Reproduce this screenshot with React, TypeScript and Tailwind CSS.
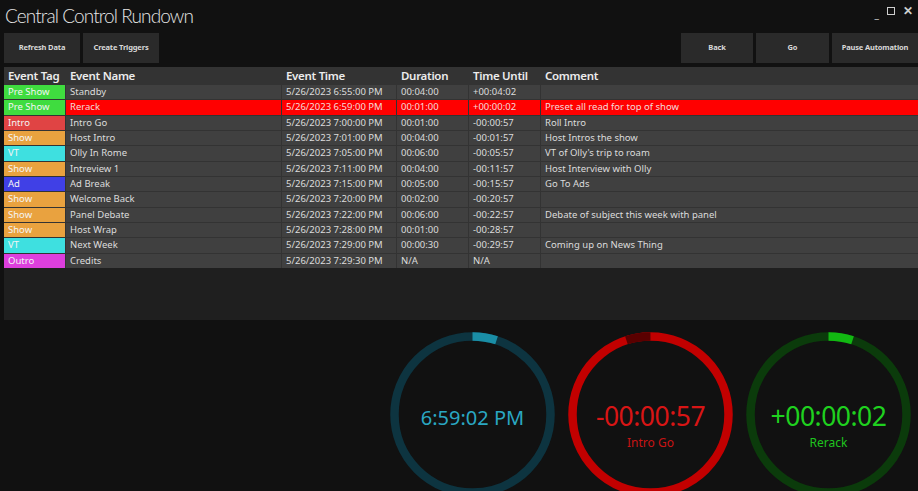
import React from "react";

type Row = {
  tag: string;
  tagClass: string;
  name: string;
  time: string;
  duration: string;
  until: string;
  comment: string;
  live?: boolean;
};

const rows: Row[] = [
  { tag: "Pre Show", tagClass: "bg-[#3fdc3f]", name: "Standby", time: "5/26/2023 6:55:00 PM", duration: "00:04:00", until: "+00:04:02", comment: "" },
  { tag: "Pre Show", tagClass: "bg-[#3fdc3f]", name: "Rerack", time: "5/26/2023 6:59:00 PM", duration: "00:01:00", until: "+00:00:02", comment: "Preset all read for top of show", live: true },
  { tag: "Intro", tagClass: "bg-[#e04444]", name: "Intro Go", time: "5/26/2023 7:00:00 PM", duration: "00:01:00", until: "-00:00:57", comment: "Roll Intro" },
  { tag: "Show", tagClass: "bg-[#e9a23f]", name: "Host Intro", time: "5/26/2023 7:01:00 PM", duration: "00:04:00", until: "-00:01:57", comment: "Host Intros the show" },
  { tag: "VT", tagClass: "bg-[#3ee0e0]", name: "Olly In Rome", time: "5/26/2023 7:05:00 PM", duration: "00:06:00", until: "-00:05:57", comment: "VT of Olly's trip to roam" },
  { tag: "Show", tagClass: "bg-[#e9a23f]", name: "Intreview 1", time: "5/26/2023 7:11:00 PM", duration: "00:04:00", until: "-00:11:57", comment: "Host Interview with Olly" },
  { tag: "Ad", tagClass: "bg-[#4040e6]", name: "Ad Break", time: "5/26/2023 7:15:00 PM", duration: "00:05:00", until: "-00:15:57", comment: "Go To Ads" },
  { tag: "Show", tagClass: "bg-[#e9a23f]", name: "Welcome Back", time: "5/26/2023 7:20:00 PM", duration: "00:02:00", until: "-00:20:57", comment: "" },
  { tag: "Show", tagClass: "bg-[#e9a23f]", name: "Panel Debate", time: "5/26/2023 7:22:00 PM", duration: "00:06:00", until: "-00:22:57", comment: "Debate of subject this week with panel" },
  { tag: "Show", tagClass: "bg-[#e9a23f]", name: "Host Wrap", time: "5/26/2023 7:28:00 PM", duration: "00:01:00", until: "-00:28:57", comment: "" },
  { tag: "VT", tagClass: "bg-[#3ee0e0]", name: "Next Week", time: "5/26/2023 7:29:00 PM", duration: "00:00:30", until: "-00:29:57", comment: "Coming up on News Thing" },
  { tag: "Outro", tagClass: "bg-[#dd3fdd]", name: "Credits", time: "5/26/2023 7:29:30 PM", duration: "N/A", until: "N/A", comment: "" },
];

const cols = "grid grid-cols-[61px_216px_115px_72px_72px_1fr]";

// ring drawn as svg: track + highlighted arc starting at top
const Ring = ({
  track,
  accent,
  from,
  to,
  pad,
  children,
}: {
  track: string;
  accent: string;
  from: number;
  to: number;
  pad: string;
  children: React.ReactNode;
}) => {
  const r = 78;
  const c = 2 * Math.PI * r;
  const len = ((to - from) / 360) * c;
  return (
    <div className="relative w-[165px] h-[165px] shrink-0">
      <svg width="165" height="165" viewBox="0 0 165 165" className="absolute inset-0">
        <circle cx="82.5" cy="82.5" r={r} fill="none" stroke={track} strokeWidth="8.5" />
        <circle
          cx="82.5"
          cy="82.5"
          r={r}
          fill="none"
          stroke={accent}
          strokeWidth="8.5"
          strokeDasharray={`${len} ${c}`}
          transform={`rotate(${from - 90} 82.5 82.5)`}
        />
      </svg>
      <div className={`absolute inset-0 flex flex-col items-center ${pad}`}>{children}</div>
    </div>
  );
};

const Btn = ({ label, w }: { label: string; w: string }) => (
  <button
    className={`${w} h-[30px] bg-[#2a2a2a] text-[#d8d8d8] text-[7.5px] font-bold tracking-[-0.15px] flex items-center justify-center`}
  >
    {label}
  </button>
);

const App = () => {
  return (
    <div
      className="w-[918px] h-[491px] overflow-hidden bg-[#111111] text-white flex flex-col"
      style={{ fontFamily: "'Noto Sans', 'Open Sans', sans-serif" }}
    >
      <div className="h-[33px] shrink-0 flex items-start justify-between pl-[5px]">
        <div
          className="text-[19px] font-light text-[#e6e6e6] leading-none pt-[6px] tracking-[-0.9px]"
          style={{ fontFamily: "Lato, 'Noto Sans', sans-serif" }}
        >
          Central Control Rundown
        </div>
        <div className="flex items-center gap-[8px] pt-[3px] pr-[5px] text-[#cfcfcf]">
          <span className="text-[10px] leading-none pt-[6px]">_</span>
          <span className="w-[8px] h-[8px] border border-[#cfcfcf]" />
          <span className="text-[12px] leading-none font-bold">✕</span>
        </div>
      </div>

      <div className="h-[30px] shrink-0 flex items-center justify-between pl-[4px]">
        <div className="flex gap-[3px]">
          <Btn label="Refresh Data" w="w-[76px]" />
          <Btn label="Create Triggers" w="w-[76px]" />
        </div>
        <div className="flex gap-[3px]">
          <Btn label="Back" w="w-[72px]" />
          <Btn label="Go" w="w-[73px]" />
          <Btn label="Pause Automation" w="w-[86px]" />
        </div>
      </div>

      <div className="mt-[4px] ml-[4px] h-[253px] shrink-0 bg-[#1f1f1f] flex flex-col">
        <div className={`${cols} h-[17px] shrink-0 bg-[#333333] text-[11.5px] font-semibold text-[#ececec] leading-[17px]`}>
          <div className="pl-[4px] tracking-[-0.3px]">Event Tag</div>
          <div className="pl-[5px] tracking-[-0.3px]">Event Name</div>
          <div className="pl-[5px] tracking-[-0.3px]">Event Time</div>
          <div className="pl-[5px] tracking-[-0.3px]">Duration</div>
          <div className="pl-[5px] tracking-[-0.3px]">Time Until</div>
          <div className="pl-[5px] tracking-[-0.3px]">Comment</div>
        </div>
        {rows.map((r, i) => (
          <div
            key={i}
            className={`${cols} h-[15.33px] shrink-0 text-[9.5px] leading-[14px] border-t border-[#333333] ${
              r.live ? "bg-[#ff0000] text-[#f4dada]" : "bg-[#404040] text-[#dcdcdc]"
            }`}
          >
            <div className={`${r.tagClass} text-[#f4f4f4] pl-[4px] whitespace-nowrap overflow-hidden`}>{r.tag}</div>
            <div className="pl-[4px] border-l border-[#333333]">{r.name}</div>
            <div className="pl-[4px] border-l border-[#333333]">{r.time}</div>
            <div className="pl-[4px] border-l border-[#333333]">{r.duration}</div>
            <div className="pl-[4px] border-l border-[#333333]">{r.until}</div>
            <div className="pl-[4px] border-l border-[#333333]">{r.comment}</div>
          </div>
        ))}
      </div>

      <div className="flex shrink-0 justify-end gap-[13px] pr-[7px] pt-[12px]">
        <Ring track="#0d3440" accent="#1a8ea6" from={0} to={18} pad="pt-[72px]">
          <div className="text-[20px] text-[#2aa7c2] leading-[28px]">6:59:02 PM</div>
        </Ring>
        <Ring track="#c20000" accent="#5a0000" from={-18} to={0} pad="pt-[66px]">
          <div className="text-[26.5px] text-[#d81515] leading-[36px] tracking-[-0.5px]">-00:00:57</div>
          <div className="text-[12px] text-[#c81414] leading-[17px]">Intro Go</div>
        </Ring>
        <Ring track="#0b3b0b" accent="#12b812" from={0} to={18} pad="pt-[66px]">
          <div className="text-[26.5px] text-[#1fd11f] leading-[36px] tracking-[-0.5px]">+00:00:02</div>
          <div className="text-[12px] text-[#1fc41f] leading-[17px]">Rerack</div>
        </Ring>
      </div>
    </div>
  );
};

export default App;
